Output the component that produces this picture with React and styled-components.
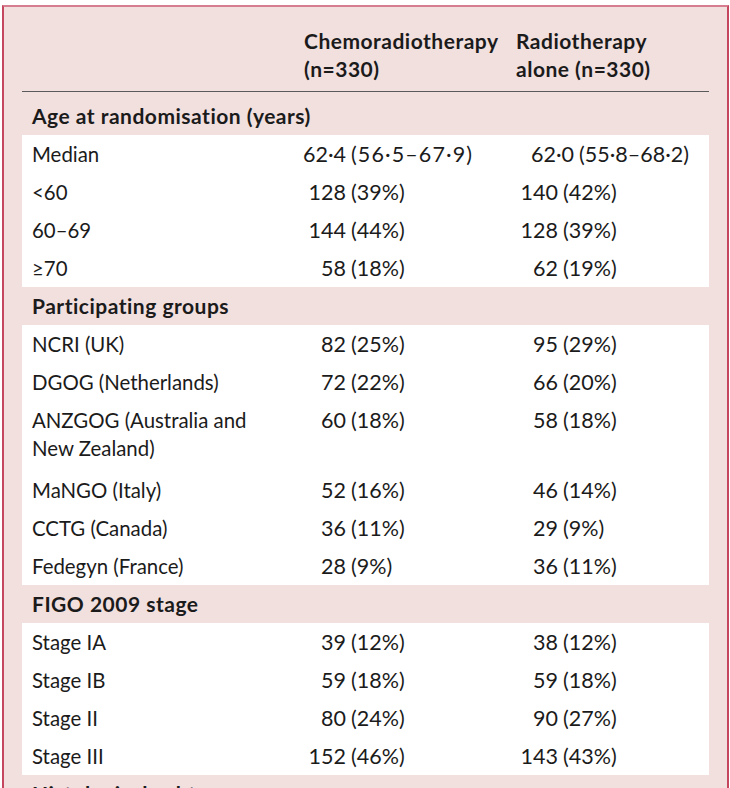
import React from "react";
import styled, { createGlobalStyle } from "styled-components";

const GlobalStyle = createGlobalStyle`
  body {
    margin: 0;
    background: #ffffff;
    font-family: Lato, "Open Sans", "Liberation Sans", sans-serif;
    color: #1b1b1b;
  }
`;

const Panel = styled.div`
  margin: 5px 0 0 2px;
  width: 727px;
  box-sizing: border-box;
  background: #f2e0df;
  border-top: 2px solid #d67d8f;
  border-left: 2px solid #c4475f;
  border-right: 2px solid #c4475f;
  padding: 0 18px 40px 18px;
  font-size: 20.4px;
`;

const Row = styled.div`
  display: grid;
  grid-template-columns: 272px 212px 1fr;
  line-height: 28px;
`;

const HeaderRow = styled(Row)`
  padding: 20px 0 8px;
  border-bottom: 1px solid #5a5a5a;
  font-weight: 700;
  font-size: 21px;
  letter-spacing: 0.5px;
`;

const HeaderCell = styled.div`
  padding-left: 10px;
`;

const SectionRow = styled.div`
  padding: ${props => (props.first ? "10px" : "5px")} 10px 5px;
  line-height: 28px;
  font-weight: 700;
  font-size: 21px;
  letter-spacing: 0.5px;
`;

const Block = styled.div`
  background: #ffffff;
`;

const DataRow = styled(Row)`
  padding: 5px 0 ${props => (props.tall ? "9px" : "5px")};
`;

const Label = styled.div`
  padding-left: 10px;
`;

const Value = styled.div`
  white-space: nowrap;
  font-size: 21.5px;
`;

const Num = styled.span`
  display: inline-block;
  width: ${props => props.w}px;
  text-align: right;
  margin-right: 5px;
`;

const Rest = styled.span`
  letter-spacing: ${props => props.spread}px;
`;

// each value: [number, bracket, number box width, letter spacing of the bracket]
const sections = [
  {
    title: "Age at randomisation (years)",
    rows: [
      ["Median", ["62·4", "(56·5–67·9)", 52, 1.1], ["62·0", "(55·8–68·2)", 68, 0]],
      ["<60", ["128", "(39%)"], ["140", "(42%)"]],
      ["60–69", ["144", "(44%)"], ["128", "(39%)"]],
      ["≥70", ["58", "(18%)"], ["62", "(19%)"]]
    ]
  },
  {
    title: "Participating groups",
    rows: [
      ["NCRI (UK)", ["82", "(25%)"], ["95", "(29%)"]],
      ["DGOG (Netherlands)", ["72", "(22%)"], ["66", "(20%)"]],
      [["ANZGOG (Australia and", "New Zealand)"], ["60", "(18%)"], ["58", "(18%)"]],
      ["MaNGO (Italy)", ["52", "(16%)"], ["46", "(14%)"]],
      ["CCTG (Canada)", ["36", "(11%)"], ["29", "(9%)"]],
      ["Fedegyn (France)", ["28", "(9%)"], ["36", "(11%)"]]
    ]
  },
  {
    title: "FIGO 2009 stage",
    rows: [
      ["Stage IA", ["39", "(12%)"], ["38", "(12%)"]],
      ["Stage IB", ["59", "(18%)"], ["59", "(18%)"]],
      ["Stage II", ["80", "(24%)"], ["90", "(27%)"]],
      ["Stage III", ["152", "(46%)"], ["143", "(43%)"]]
    ]
  },
  {
    title: "Histological subtype",
    rows: []
  }
];

const Cell = ({ value }) => {
  const [num, rest, w = 52, spread = 0] = value;
  return (
    <Value>
      <Num w={w}>{num}</Num>
      <Rest spread={spread}>{rest}</Rest>
    </Value>
  );
};

const App = () => {
  return (
    <>
      <GlobalStyle />
      <Panel>
        <HeaderRow>
          <div />
          <HeaderCell>
            Chemoradiotherapy
            <br />
            (n=330)
          </HeaderCell>
          <HeaderCell>
            Radiotherapy
            <br />
            alone (n=330)
          </HeaderCell>
        </HeaderRow>
        {sections.map((section, i) => (
          <div key={section.title}>
            <SectionRow first={i === 0}>{section.title}</SectionRow>
            {section.rows.length > 0 && (
              <Block>
                {section.rows.map(([label, chemo, radio]) => {
                  const tall = Array.isArray(label);
                  return (
                    <DataRow key={tall ? label[0] : label} tall={tall}>
                      <Label>
                        {tall ? (
                          <>
                            {label[0]}
                            <br />
                            {label[1]}
                          </>
                        ) : (
                          label
                        )}
                      </Label>
                      <Cell value={chemo} />
                      <Cell value={radio} />
                    </DataRow>
                  );
                })}
              </Block>
            )}
          </div>
        ))}
      </Panel>
    </>
  );
};

export default App;
